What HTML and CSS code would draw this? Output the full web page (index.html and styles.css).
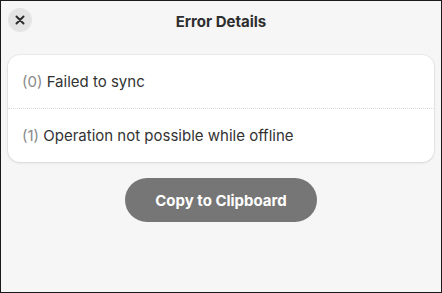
FILE: index.html
```html
<!DOCTYPE html>
<html lang="en">
<head>
    <meta charset="UTF-8">
    <title>Error Details</title>
    <link rel="stylesheet" href="styles.css">
</head>
<body>
    <div class="window">
        <header class="headerbar">
            <button class="close" aria-label="Close">
                <svg width="10" height="10" viewBox="0 0 10 10">
                    <path d="M1.5 1.5 L8.5 8.5 M8.5 1.5 L1.5 8.5" stroke="#2e2e2e" stroke-width="2" stroke-linecap="round"/>
                </svg>
            </button>
            <h1 class="title">Error Details</h1>
        </header>

        <div class="content">
            <ul class="errors">
                <li class="row"><span class="num">(0)</span> Failed to sync</li>
                <li class="row"><span class="num">(1)</span> Operation not possible while offline</li>
            </ul>

            <button class="copy">Copy to Clipboard</button>
        </div>
    </div>
</body>
</html>
```

FILE: styles.css
```css
* {
    box-sizing: border-box;
    margin: 0;
    padding: 0;
}
html, body {
    width: 442px;
    height: 293px;
    overflow: hidden;
}
body {
    font-family: Inter, "Noto Sans", sans-serif;
    background: #fff;
}
.window {
    width: 442px;
    height: 293px;
    border: 1px solid #1a1a1a;
    background: #f6f6f6;
    display: flex;
    flex-direction: column;
}
.headerbar {
    position: relative;
    height: 40px;
    display: flex;
    align-items: center;
    justify-content: center;
}
.title {
    font-size: 15px;
    font-weight: 700;
    color: #2e2e2e;
}
.close {
    position: absolute;
    left: 7px;
    top: 7px;
    width: 24px;
    height: 24px;
    border-radius: 50%;
    border: none;
    background: #e4e4e4;
    display: flex;
    align-items: center;
    justify-content: center;
}
.content {
    padding: 14px 7px 0;
    display: flex;
    flex-direction: column;
    align-items: center;
}
.errors {
    list-style: none;
    width: 100%;
    background: #fff;
    border-radius: 12px;
    box-shadow: 0 0 0 1px rgba(0,0,0,0.04), 0 1px 3px rgba(0,0,0,0.1);
}
.row {
    height: 53px;
    display: flex;
    align-items: center;
    padding-left: 14px;
    font-size: 15px;
    color: #333;
    white-space: pre;
}
.row + .row {
    height: 54px;
    border-top: 1px dotted #dcdcdc;
}
.num {
    color: #8a8a8a;
}
.copy {
    margin-top: 16px;
    width: 192px;
    height: 44px;
    border: none;
    border-radius: 22px;
    background: #767676;
    color: #fff;
    font-family: Inter, "Noto Sans", sans-serif;
    font-size: 15px;
    font-weight: 700;
}
```
